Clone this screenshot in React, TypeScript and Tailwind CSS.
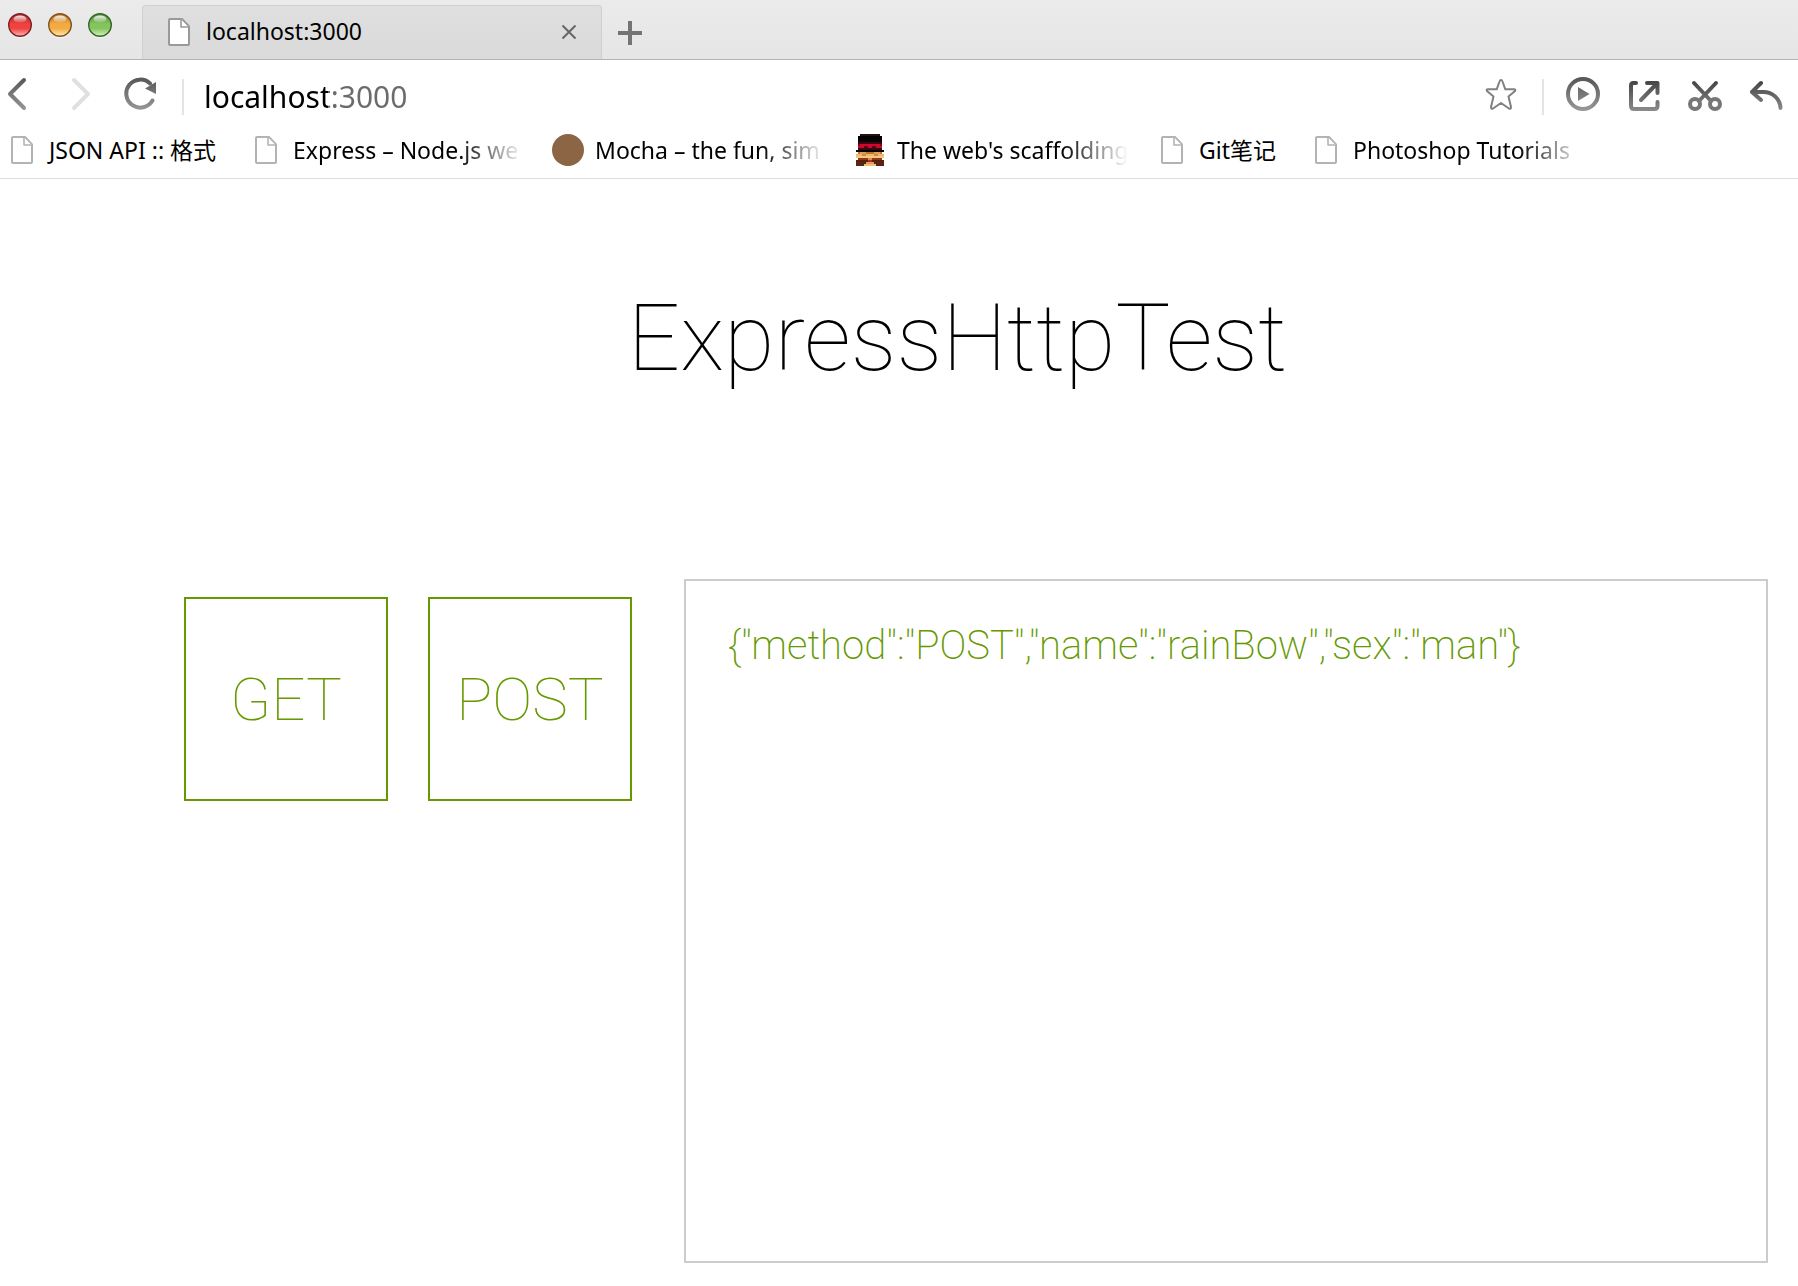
import type { ReactNode } from "react";

const LIGHTS = [
  { id: "close", label: "Close window", top: "#a3262b", mid: "#f0423f", low: "#f9b9b8", ring: "#7d2224" },
  { id: "min", label: "Minimize window", top: "#b06a1f", mid: "#f1ab43", low: "#fdeeb0", ring: "#835020" },
  { id: "zoom", label: "Zoom window", top: "#4b8b37", mid: "#83c45f", low: "#d9f3bf", ring: "#376528" },
];

function TrafficLight({ light }: { light: (typeof LIGHTS)[number] }) {
  return (
    <button type="button" aria-label={light.label} className="size-6">
      <svg viewBox="0 0 24 24" className="size-6 overflow-visible">
        <defs>
          <linearGradient id={light.id} x1="0" y1="0" x2="0" y2="1">
            <stop offset="0" stopColor={light.top} />
            <stop offset="0.45" stopColor={light.mid} />
            <stop offset="0.65" stopColor={light.mid} />
            <stop offset="1" stopColor={light.low} />
          </linearGradient>
          <linearGradient id={light.id + "-shine"} x1="0" y1="0" x2="0" y2="1">
            <stop offset="0" stopColor="#fff" stopOpacity="0.9" />
            <stop offset="1" stopColor="#fff" stopOpacity="0.1" />
          </linearGradient>
        </defs>
        <circle cx="12" cy="13" r="12" fill="#fff" opacity="0.6" />
        <circle cx="12" cy="12" r="11.3" fill={"url(#" + light.id + ")"} stroke={light.ring} strokeWidth="1.4" />
        <ellipse cx="12" cy="6" rx="6.5" ry="3.6" fill={"url(#" + light.id + "-shine)"} />
      </svg>
    </button>
  );
}

function PageIcon({ stroke, fill }: { stroke: string; fill: string }) {
  return (
    <svg viewBox="0 0 22 28" className="h-7 w-[22px]" fill={fill} stroke={stroke} strokeWidth="2" strokeLinejoin="round">
      <path d="M2 1H14L21 8.500V26Q21 27 20 27H2Q1 27 1 26V2Q1 1 2 1Z" />
      <path d="M13 1.500V9H20.500" strokeWidth="1.600" />
    </svg>
  );
}

function MochaIcon() {
  return (
    <svg viewBox="0 0 32 32" className="size-8">
      <circle cx="16" cy="16" r="16" fill="#8b6544" />
    </svg>
  );
}

const HAT_ROWS: [number, number, number, string][] = [
  [0, 2, 10, "#1c1414"], [1, 1, 12, "#050203"], [2, 1, 12, "#050203"], [3, 1, 12, "#0a0204"],
  [4, 1, 12, "#3a0410"], [5, 1, 12, "#d0092c"], [5, 1, 1, "#7a0a1c"], [5, 12, 1, "#7a0a1c"],
  [6, 1, 12, "#c50a2b"], [6, 4, 2, "#5b0616"], [6, 8, 2, "#5b0616"], [7, 1, 12, "#3b0710"],
  [8, 0, 14, "#050203"], [9, 1, 12, "#b9752f"], [9, 2, 3, "#e0a050"], [9, 9, 3, "#e0a050"],
  [10, 0, 14, "#f0b766"], [10, 3, 2, "#c98a48"], [10, 9, 2, "#c98a48"],
  [11, 0, 14, "#f7c67c"], [12, 1, 12, "#8a3d1d"], [12, 6, 2, "#d98b45"],
  [13, 0, 14, "#57200f"], [13, 6, 2, "#ba2430"], [14, 0, 14, "#5d2411"], [14, 5, 4, "#dca05a"],
  [15, 0, 4, "#5d2411"], [15, 4, 6, "#f2be72"], [15, 10, 4, "#5d2411"],
];

function HatIcon() {
  return (
    <svg viewBox="-1 0 16 16" className="size-8" shapeRendering="crispEdges">
      {HAT_ROWS.map(([y, x, w, color], i) => (
        <rect key={i} x={x} y={y} width={w} height="1" fill={color} />
      ))}
    </svg>
  );
}

function Bookmark({ icon, text, faded }: { icon: ReactNode; text: string; faded?: boolean }) {
  return (
    <a href="#" className="flex shrink-0 items-center gap-[11px]">
      <span className="flex w-8 justify-center">{icon}</span>
      <span
        className={
          faded
            ? "w-[231px] overflow-hidden whitespace-nowrap [mask-image:linear-gradient(to_right,#000_165px,transparent_231px)]"
            : "pr-[6px] whitespace-nowrap"
        }
      >
        {text}
      </span>
    </a>
  );
}

function ToolButton({ label, children }: { label: string; children: ReactNode }) {
  return (
    <button type="button" aria-label={label} className="shrink-0">
      <svg viewBox="0 0 34 34" className="size-[34px]" fill="none" strokeLinecap="round" strokeLinejoin="round">
        {children}
      </svg>
    </button>
  );
}

export default function App() {
  const page = <PageIcon stroke="#b3b3b3" fill="#fff" />;
  return (
    <div className="flex min-h-screen flex-col bg-white font-['Noto_Sans','Noto_Sans_CJK_SC',sans-serif] text-[23px] leading-8 text-black">
      <svg className="absolute size-0" aria-hidden="true">
        <defs>
          <linearGradient id="ink" gradientUnits="userSpaceOnUse" x1="0" y1="0" x2="0" y2="34">
            <stop offset="0" stopColor="#555" />
            <stop offset="1" stopColor="#999" />
          </linearGradient>
          <linearGradient id="ink-dark" gradientUnits="userSpaceOnUse" x1="0" y1="4" x2="0" y2="34">
            <stop offset="0" stopColor="#444" />
            <stop offset="1" stopColor="#8c8c8c" />
          </linearGradient>
        </defs>
      </svg>

      <header className="flex h-[60px] items-stretch border-b border-[#b4b4b4] bg-linear-to-b from-[#ebebeb] to-[#e6e6e6]">
        <div className="flex w-[142px] gap-4 pt-[13px] pl-2">
          {LIGHTS.map((light) => (
            <TrafficLight key={light.id} light={light} />
          ))}
        </div>
        <div className="mt-[5px] flex w-[460px] items-center rounded-t border border-b-0 border-[#cfcfcf] bg-linear-to-b from-[#dfdfdf] to-[#dadada] pr-6 pb-[2px] pl-[25px]">
          <PageIcon stroke="#999" fill="#fff" />
          <span className="ml-4 flex-1 pb-[2px]">localhost:3000</span>
          <button type="button" aria-label="Close tab">
            <svg viewBox="0 0 16 16" className="size-4" stroke="#666" strokeWidth="2">
              <path d="M1.500 1.500L14.500 14.500M14.500 1.500L1.500 14.500" />
            </svg>
          </button>
        </div>
        <button type="button" aria-label="New tab" className="ml-4 pt-[7px]">
          <svg viewBox="0 0 24 24" className="size-6" stroke="#747474" strokeWidth="4">
            <path d="M12 0V24M0 12H24" />
          </svg>
        </button>
      </header>

      <nav aria-label="Navigation" className="flex h-[68px] items-center pr-[15px]">
        <div className="flex items-center gap-7">
          <ToolButton label="Back">
            <path d="M24 3L10 17L24 31" stroke="url(#ink)" strokeWidth="4" />
          </ToolButton>
          <ToolButton label="Forward">
            <path d="M12 3L26 17L12 31" stroke="#e0e0e0" strokeWidth="4" />
          </ToolButton>
          <ToolButton label="Reload">
            <path d="M28.500 23.500A14 14 0 1 1 26 6.500" stroke="url(#ink)" strokeWidth="4" />
            <path d="M32 5V17L21 11.500Z" fill="url(#ink)" />
          </ToolButton>
        </div>
        <div className="mt-[6px] ml-6 h-9 w-[2px] bg-[#e4e4e4]" />
        <input
          aria-label="Address"
          defaultValue="localhost:3000"
          className="ml-5 min-w-0 flex-1 bg-[linear-gradient(to_right,#000_124px,#6b6b6b_124px)] bg-clip-text pt-[5px] text-[30px] leading-10 text-transparent outline-none"
        />
        <ToolButton label="Bookmark this page">
          <path
            d="M17 3Q18 3 18.500 4.500L21.300 12.300H30Q32 12.500 31 14L24.500 19.500L27 30Q27 32.500 25 31.500L17 26L9 31.500Q7 32.500 7 30L9.500 19.500L3 14Q2 12.500 4 12.300H12.700L15.500 4.500Q16 3 17 3Z"
            stroke="#808080"
            strokeWidth="2"
          />
        </ToolButton>
        <div className="mt-[6px] mr-[22px] ml-6 h-9 w-[2px] bg-[#e4e4e4]" />
        <div className="flex items-center gap-[27px]">
          <ToolButton label="Play">
            <circle cx="17" cy="17" r="15" stroke="url(#ink)" strokeWidth="4" />
            <path d="M12 10V24L23.500 17Z" fill="url(#ink)" />
          </ToolButton>
          <ToolButton label="Open in new window">
            <path
              d="M9 6H6.500Q4 6 4 8.500V28.500Q4 32 7 32H27.500Q30.500 32 30.500 29V25M20 6H30.500V16M30 6.500L14 23"
              stroke="url(#ink-dark)"
              strokeWidth="4"
            />
          </ToolButton>
          <ToolButton label="Cut">
            <path d="M6 6L23 24M28 6L11 24" stroke="url(#ink-dark)" strokeWidth="4" />
            <circle cx="7" cy="27" r="5" stroke="#777" strokeWidth="4" />
            <circle cx="27" cy="27" r="5" stroke="#777" strokeWidth="4" />
          </ToolButton>
          <ToolButton label="Undo">
            <path d="M12 6L3 15L12 23M4 15H14C24 15 31 22 31.500 31" stroke="url(#ink-dark)" strokeWidth="4" />
          </ToolButton>
        </div>
      </nav>

      <nav
        aria-label="Bookmarks"
        className="flex h-[51px] items-center gap-[28px] overflow-hidden border-b border-[#dedede] pb-[6px] pl-[6px]"
      >
        <Bookmark icon={page} text="JSON API :: 格式" />
        <Bookmark icon={page} text="Express – Node.js we" faded />
        <Bookmark icon={<MochaIcon />} text="Mocha – the fun, sim" faded />
        <Bookmark icon={<HatIcon />} text="The web's scaffolding" faded />
        <Bookmark icon={page} text="Git笔记" />
        <Bookmark icon={page} text="Photoshop Tutorials" faded />
      </nav>

      <main className="flex flex-1 flex-col pl-[117px] font-['Roboto',sans-serif] font-thin">
        <h1 className="pt-[100px] text-center text-[92px] leading-[120px]">ExpressHttpTest</h1>
        <section className="mt-[180px] flex items-start pr-[30px] pl-[67px] text-[#669900]">
          <div className="mt-[18px] mr-[52px] flex gap-10">
            <button type="button" className="size-[204px] border-2 border-[#669900] pt-[2px] text-[60px] leading-none">
              GET
            </button>
            <button type="button" className="size-[204px] border-2 border-[#669900] pt-[2px] text-[60px] leading-none">
              POST
            </button>
          </div>
          <output className="block min-h-[684px] min-w-0 flex-1 border-2 border-[#ccc] px-[42px] py-10 text-[40px] leading-[50px] font-extralight wrap-break-word">
            {'{"method":"POST","name":"rainBow","sex":"man"}'}
          </output>
        </section>
      </main>
    </div>
  );
}
